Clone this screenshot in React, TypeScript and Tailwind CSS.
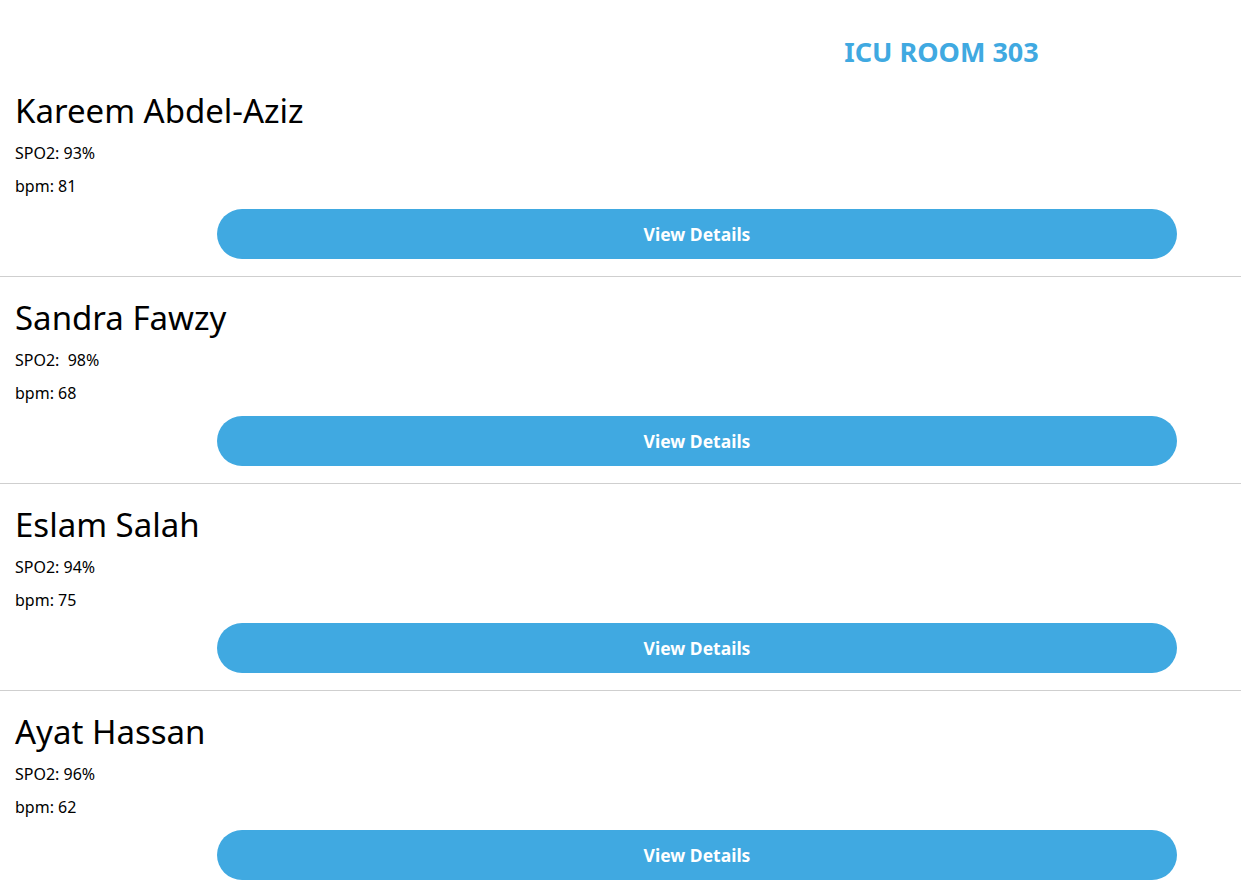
import React from "react";

const patients = [
  { name: "Kareem Abdel-Aziz", spo2: "93%", bpm: 81 },
  { name: "Sandra Fawzy", spo2: " 98%", bpm: 68 },
  { name: "Eslam Salah", spo2: "94%", bpm: 75 },
  { name: "Ayat Hassan", spo2: "96%", bpm: 62 },
];

export default function App() {
  return (
    <div className="min-h-screen bg-white text-black font-['Noto_Sans',sans-serif]">
      <header className="h-[70px] pl-[642px] pt-[34px]">
        <h1 className="text-center text-[27px] leading-[36px] font-bold text-[#40a9e1]">ICU ROOM 303</h1>
      </header>

      <main className="flex flex-col">
        {patients.map((p) => (
          <section key={p.name} className="border-b border-[#cfcfcf] px-[15px] pt-[22px] pb-[17px]">
            <h2 className="text-[33px] leading-[38px] font-normal">{p.name}</h2>
            <p className="mt-[13px] text-[16px] leading-[20px] whitespace-pre">SPO2: {p.spo2}</p>
            <p className="mt-[13px] text-[16px] leading-[20px]">bpm: {p.bpm}</p>
            <div className="mt-[13px] flex pl-[202px] pr-[49px]">
              <button className="h-[50px] w-full rounded-full bg-[#40a9e1] text-[17.5px] font-bold text-white">
                View Details
              </button>
            </div>
          </section>
        ))}
      </main>
    </div>
  );
}
